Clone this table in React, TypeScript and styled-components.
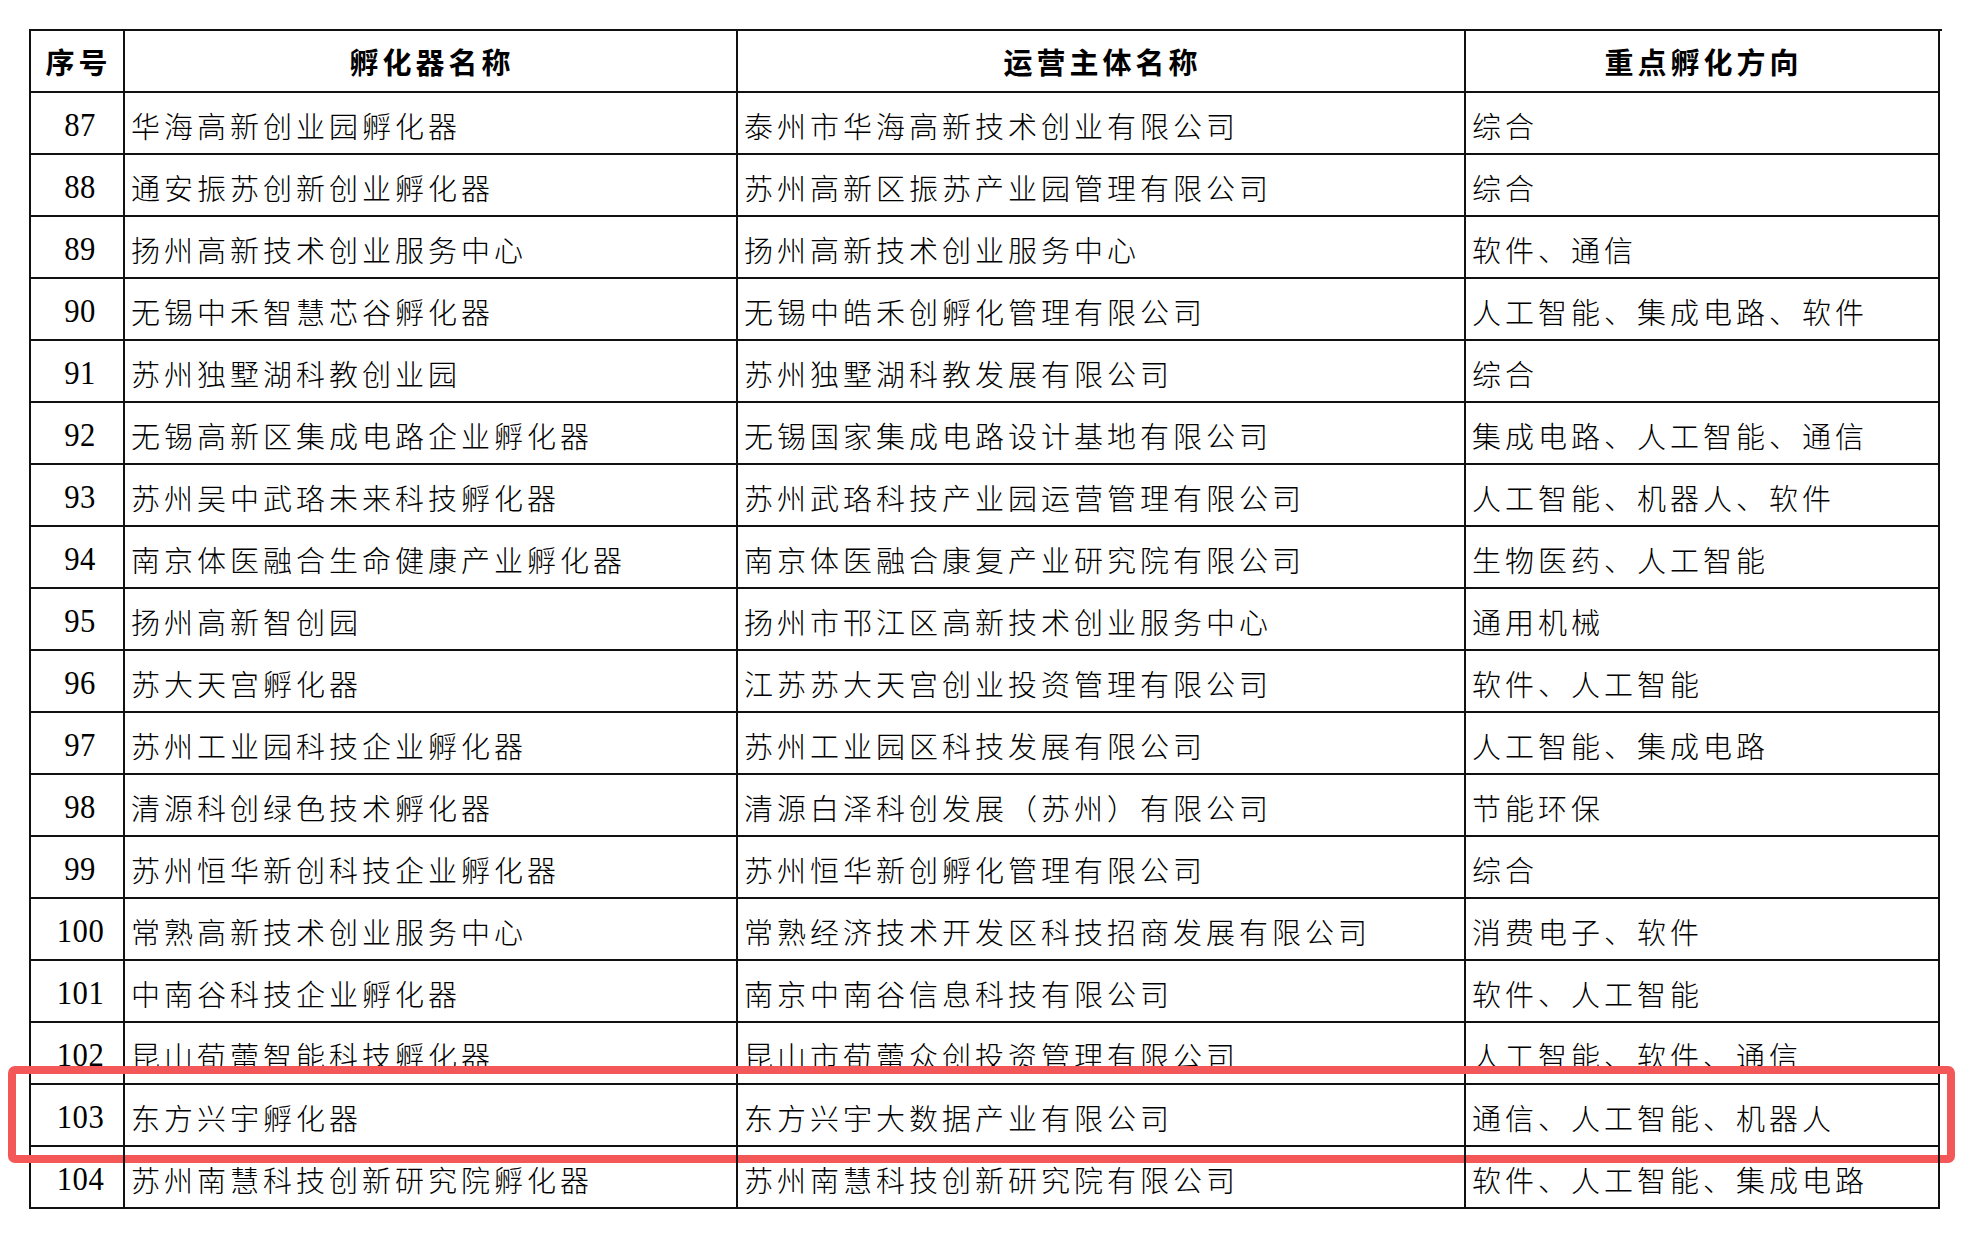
import React from 'react';
import styled, { createGlobalStyle } from 'styled-components';

const GlobalStyle = createGlobalStyle`
  html, body { margin: 0; padding: 0; background: #fff; }
  body { width: 1962px; height: 1234px; overflow: hidden; }
`;

const Page = styled.div`
  padding: 29px 0 0 29px;
  background: #fff;
  color: #111;
  font-family: "Noto Sans CJK SC", "Noto Sans", sans-serif;
`;

const Table = styled.div`
  position: relative;
  width: 1911px;
  border-top: 2px solid #111;
  border-left: 2px solid #111;
`;

const Row = styled.div`
  position: relative;
  display: grid;
  grid-template-columns: 94px 613px 728px 474px;
  height: 62px;
`;

const Cell = styled.div<{ $align?: 'left' | 'center'; $head?: boolean }>`
  display: flex;
  align-items: center;
  justify-content: ${p => (p.$align === 'center' ? 'center' : 'flex-start')};
  box-sizing: border-box;
  border-right: 2px solid #111;
  border-bottom: 2px solid #111;
  padding: ${p => (p.$head ? '0 0 0 3px' : '4px 0 0 6px')};
  overflow: visible;
  white-space: nowrap;
`;

const HeadText = styled.span`
  font-size: 29px;
  font-weight: 700;
  letter-spacing: 4px;
  color: #000;
`;

const Num = styled.span`
  font-family: "Liberation Serif", "Times New Roman", serif;
  font-size: 33px;
  letter-spacing: 0.5px;
  display: inline-block;
  transform: scale(0.93, 1.04);
  color: #000;
`;

const Text = styled.span`
  font-size: 29px;
  font-weight: 300;
  letter-spacing: 4px;
  color: #000;
`;

const Highlight = styled.div`
  position: absolute;
  left: -23px;
  right: -13px;
  top: -19px;
  bottom: -16px;
  border: 8px solid #f45757;
  border-radius: 7px;
  pointer-events: none;
`;

type Item = { no: number; name: string; operator: string; focus: string };

const rows: Item[] = [
  { no: 87, name: '华海高新创业园孵化器', operator: '泰州市华海高新技术创业有限公司', focus: '综合' },
  { no: 88, name: '通安振苏创新创业孵化器', operator: '苏州高新区振苏产业园管理有限公司', focus: '综合' },
  { no: 89, name: '扬州高新技术创业服务中心', operator: '扬州高新技术创业服务中心', focus: '软件、通信' },
  { no: 90, name: '无锡中禾智慧芯谷孵化器', operator: '无锡中皓禾创孵化管理有限公司', focus: '人工智能、集成电路、软件' },
  { no: 91, name: '苏州独墅湖科教创业园', operator: '苏州独墅湖科教发展有限公司', focus: '综合' },
  { no: 92, name: '无锡高新区集成电路企业孵化器', operator: '无锡国家集成电路设计基地有限公司', focus: '集成电路、人工智能、通信' },
  { no: 93, name: '苏州吴中武珞未来科技孵化器', operator: '苏州武珞科技产业园运营管理有限公司', focus: '人工智能、机器人、软件' },
  { no: 94, name: '南京体医融合生命健康产业孵化器', operator: '南京体医融合康复产业研究院有限公司', focus: '生物医药、人工智能' },
  { no: 95, name: '扬州高新智创园', operator: '扬州市邗江区高新技术创业服务中心', focus: '通用机械' },
  { no: 96, name: '苏大天宫孵化器', operator: '江苏苏大天宫创业投资管理有限公司', focus: '软件、人工智能' },
  { no: 97, name: '苏州工业园科技企业孵化器', operator: '苏州工业园区科技发展有限公司', focus: '人工智能、集成电路' },
  { no: 98, name: '清源科创绿色技术孵化器', operator: '清源白泽科创发展（苏州）有限公司', focus: '节能环保' },
  { no: 99, name: '苏州恒华新创科技企业孵化器', operator: '苏州恒华新创孵化管理有限公司', focus: '综合' },
  { no: 100, name: '常熟高新技术创业服务中心', operator: '常熟经济技术开发区科技招商发展有限公司', focus: '消费电子、软件' },
  { no: 101, name: '中南谷科技企业孵化器', operator: '南京中南谷信息科技有限公司', focus: '软件、人工智能' },
  { no: 102, name: '昆山荀蕾智能科技孵化器', operator: '昆山市荀蕾众创投资管理有限公司', focus: '人工智能、软件、通信' },
  { no: 103, name: '东方兴宇孵化器', operator: '东方兴宇大数据产业有限公司', focus: '通信、人工智能、机器人' },
  { no: 104, name: '苏州南慧科技创新研究院孵化器', operator: '苏州南慧科技创新研究院有限公司', focus: '软件、人工智能、集成电路' },
];

const HIGHLIGHTED = 103;

export default function App() {
  return (
    <>
      <GlobalStyle />
      <Page>
        <Table>
          <Row>
            <Cell $align="center" $head><HeadText>序号</HeadText></Cell>
            <Cell $align="center" $head><HeadText>孵化器名称</HeadText></Cell>
            <Cell $align="center" $head><HeadText>运营主体名称</HeadText></Cell>
            <Cell $align="center" $head><HeadText>重点孵化方向</HeadText></Cell>
          </Row>
          {rows.map(r => (
            <Row key={r.no}>
              <Cell $align="center"><Num>{r.no}</Num></Cell>
              <Cell><Text>{r.name}</Text></Cell>
              <Cell><Text>{r.operator}</Text></Cell>
              <Cell><Text>{r.focus}</Text></Cell>
              {r.no === HIGHLIGHTED && <Highlight />}
            </Row>
          ))}
        </Table>
      </Page>
    </>
  );
}
